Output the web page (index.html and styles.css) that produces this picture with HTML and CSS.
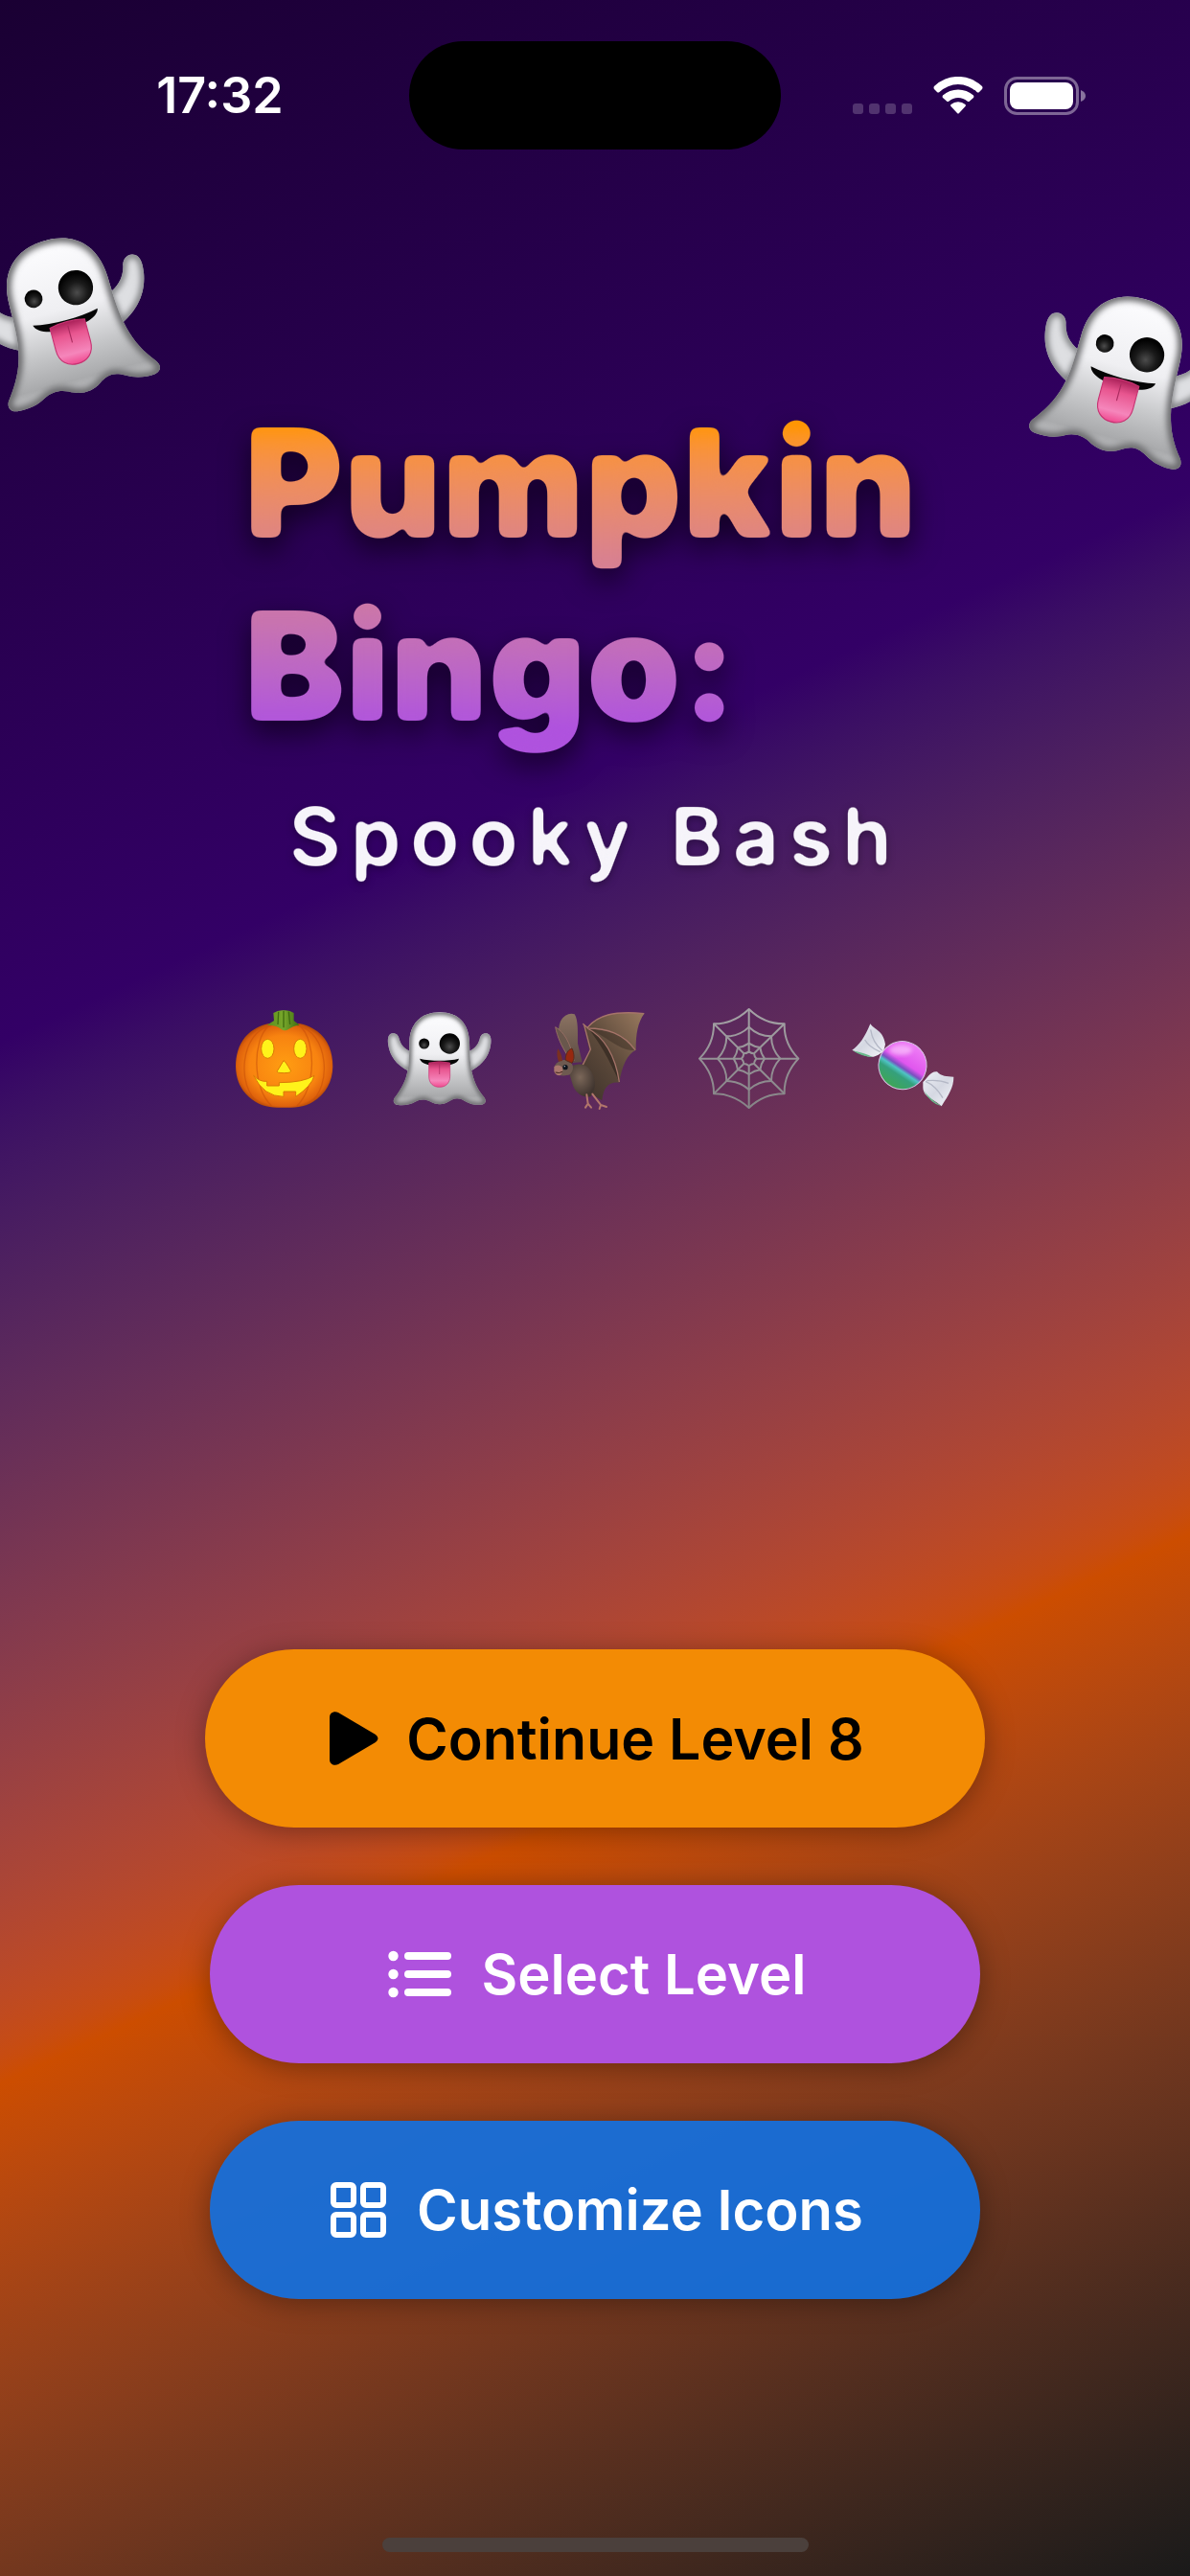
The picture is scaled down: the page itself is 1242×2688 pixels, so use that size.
FILE: index.html
```html
<!DOCTYPE html>
<html lang="en">
<head>
<meta charset="utf-8">
<meta name="viewport" content="width=device-width, initial-scale=1">
<title>Pumpkin Bingo: Spooky Bash</title>
<link rel="stylesheet" href="styles.css">
</head>
<body>
<svg class="defs" aria-hidden="true">
  <defs>
    <filter id="round-large" x="-5%" y="-5%" width="110%" height="110%" color-interpolation-filters="sRGB">
      <feGaussianBlur stdDeviation="5"/>
      <feComponentTransfer><feFuncA type="linear" slope="11" intercept="-5"/></feComponentTransfer>
    </filter>
    <filter id="round-small" x="-5%" y="-5%" width="110%" height="110%" color-interpolation-filters="sRGB">
      <feGaussianBlur stdDeviation="3"/>
      <feComponentTransfer><feFuncA type="linear" slope="7" intercept="-3"/></feComponentTransfer>
    </filter>
    <linearGradient id="ghost-fill" x1="0" y1="0" x2="0" y2="1">
      <stop offset="0" stop-color="#fdfdff"/><stop offset=".45" stop-color="#efeff2"/><stop offset=".7" stop-color="#c6c7c9"/><stop offset=".9" stop-color="#a9aaac"/><stop offset="1" stop-color="#c4c5c7"/>
    </linearGradient>
    <radialGradient id="eye-fill" cx=".5" cy=".65" r=".55">
      <stop offset="0" stop-color="#4c4c4c"/><stop offset=".55" stop-color="#1a1a1a"/><stop offset="1" stop-color="#030303"/>
    </radialGradient>
    <linearGradient id="tongue-fill" x1="0" y1="0" x2="0" y2="1">
      <stop offset="0" stop-color="#a81f57"/><stop offset=".3" stop-color="#e8558f"/><stop offset=".75" stop-color="#f586bb"/><stop offset="1" stop-color="#f04a90"/>
    </linearGradient>
    <filter id="soft" x="-20%" y="-20%" width="140%" height="140%"><feGaussianBlur stdDeviation="6"/></filter>
    <path id="ghost-arm-l" d="M600 206C582 200 566 188 560 166C558 152 548 146 538 148C524 151 523 168 526 186C531 216 548 246 590 266Z"/>
    <path id="ghost-arm-r" d="M774 206C790 200 806 188 812 166C814 152 824 146 834 148C848 151 849 168 846 186C841 216 824 246 782 266Z"/>
    <path id="ghost-body" d="M687 82C628 82 593 118 592 176C591 218 592 246 584 275C577 305 560 330 545 350C539 360 543 370 556 372C580 374 596 370 610 362C626 353 642 354 656 361C676 373 698 373 716 361C734 349 746 349 764 359C780 369 800 373 818 371C832 368 833 358 826 348C808 326 796 304 789 275C782 246 781 218 780 176C778 118 746 82 687 82Z"/>
    <clipPath id="ghost-clip"><use href="#ghost-body"/></clipPath>
    <clipPath id="arm-clip"><use href="#ghost-arm-l"/><use href="#ghost-arm-r"/></clipPath>
    <symbol id="ghost" viewBox="525 66 324 324" overflow="visible">
      <g fill="#dedfe2"><use href="#ghost-arm-l"/><use href="#ghost-arm-r"/></g>
      <g clip-path="url(#arm-clip)"><g fill="none" stroke="#77787b" stroke-width="12" filter="url(#soft)"><use href="#ghost-arm-l"/><use href="#ghost-arm-r"/></g></g>
      <use href="#ghost-body" fill="url(#ghost-fill)"/>
      <g clip-path="url(#ghost-clip)"><use href="#ghost-body" fill="none" stroke="#67686b" stroke-width="16" filter="url(#soft)"/></g>
      <circle cx="638" cy="180" r="16.500" fill="url(#eye-fill)"/>
      <circle cx="718" cy="180" r="32" fill="url(#eye-fill)"/>
      <path d="M624 227C660 235 712 235 747 227C744 243 714 250 686 250C656 250 628 243 624 227Z" fill="#050505"/>
      <path d="M653 240Q686 232 719 240V282C719 305 704 316 686 316S653 305 653 282Z" fill="url(#tongue-fill)" stroke="#c73372" stroke-width="2"/>
      <path d="M686 244V276" stroke="#a92b5f" stroke-width="2"/>
    </symbol>
    <radialGradient id="pumpkin-fill" cx=".5" cy=".5" r=".55">
      <stop offset="0" stop-color="#ff9d12"/><stop offset=".65" stop-color="#f88310"/><stop offset=".88" stop-color="#df620c"/><stop offset="1" stop-color="#9b3a08"/>
    </radialGradient>
    <linearGradient id="stem-fill"><stop offset="0" stop-color="#5d8b1c"/><stop offset=".5" stop-color="#78a82b"/><stop offset="1" stop-color="#3d6a10"/></linearGradient>
    <linearGradient id="wing-fill" x1="0" y1="1" x2="1" y2="0"><stop offset="0" stop-color="#3b3029"/><stop offset=".5" stop-color="#5d4a3b"/><stop offset="1" stop-color="#9a7a5f"/></linearGradient>
    <linearGradient id="back-wing-fill" x1="0" y1="0" x2="0" y2="1"><stop offset="0" stop-color="#8b7362"/><stop offset="1" stop-color="#5c4b43"/></linearGradient>
    <radialGradient id="bat-fill" cx=".45" cy=".4" r=".6"><stop offset="0" stop-color="#7b6759"/><stop offset="1" stop-color="#40352f"/></radialGradient>
    <linearGradient id="web-stroke" gradientUnits="userSpaceOnUse" x1="0" y1="66" x2="0" y2="390"><stop offset="0" stop-color="#a5a2a6"/><stop offset="1" stop-color="#858386"/></linearGradient>
    <linearGradient id="candy-fill" gradientUnits="userSpaceOnUse" x1="990" y1="180" x2="940" y2="320">
      <stop offset="0" stop-color="#ee7cf5"/><stop offset=".42" stop-color="#e056ee"/><stop offset=".53" stop-color="#7b4fc0"/><stop offset=".6" stop-color="#4fc4c4"/><stop offset=".7" stop-color="#35a07c"/><stop offset="1" stop-color="#3fa654"/>
    </linearGradient>
    <linearGradient id="wrap-fill" x1="0" y1="0" x2="1" y2="1"><stop offset="0" stop-color="#eef0f6"/><stop offset=".5" stop-color="#d5d8e2"/><stop offset="1" stop-color="#f4f5fa"/></linearGradient>
  </defs>
</svg>

<div class="screen">
  <header class="status">
    <time class="clock">17:32</time>
    <div class="island"></div>
    <div class="indicators">
      <span class="signal"><i></i><i></i><i></i><i></i></span>
      <svg class="wifi" viewBox="0 0 52 39" aria-label="Wi-Fi">
        <g fill="#fff">
          <path d="M1 10A36 36 0 0 1 51 10Q52 11.500 51 13L48 16Q47 17 45.500 16A28 28 0 0 0 6.500 16Q5 17 4 16L1 13Q0 11.500 1 10Z"/>
          <path d="M10 19.500A24 24 0 0 1 42 19.500Q43 21 42 22L38 25.500Q37 26.500 35.500 25.500A14.500 14.500 0 0 0 16.500 25.500Q15 26.500 14 25.500L10 22Q9 21 10 19.500Z"/>
          <path d="M18.500 29A12 12 0 0 1 33.500 29Q34.500 30 33.500 31L27 38Q26 39 25 38L18.500 31Q17.500 30 18.500 29Z"/>
        </g>
      </svg>
      <svg class="battery" viewBox="0 0 86 40" aria-label="Battery full">
        <rect x="1.500" y="1.500" width="75" height="37" rx="12" fill="none" stroke="#fff" stroke-opacity=".4" stroke-width="3"/>
        <rect x="6" y="6" width="66" height="28" rx="8" fill="#fff"/>
        <path d="M80 14Q85 16 85 20T80 26Z" fill="#fff" fill-opacity=".45"/>
      </svg>
    </div>
  </header>

  <svg class="floating floating-left" aria-hidden="true"><use href="#ghost"/></svg>
  <svg class="floating floating-right" aria-hidden="true"><use href="#ghost"/></svg>

  <main class="content">
    <h1 class="title">Pumpkin<br>Bingo:</h1>
    <p class="subtitle">Spooky Bash</p>

    <div class="icons" aria-hidden="true">
      <svg viewBox="39 66 324 324">
        <path d="M200 124C170 108 128 118 96 142C62 168 48 208 48 252C49 300 70 338 110 362C138 380 170 380 200 380S262 380 290 362C330 338 351 300 352 252C352 208 338 168 304 142C272 118 230 108 200 124Z" fill="url(#pumpkin-fill)"/>
        <g fill="none" stroke="#c9520a" stroke-width="4" opacity=".6"><path d="M160 124C60 140 50 320 120 364M150 126C100 170 100 320 160 374M240 124C340 140 350 320 280 364M250 126C300 170 300 320 240 374"/></g>
        <path d="M146 122L168 108L166 84Q182 74 198 76Q216 74 230 84V108L248 122Q226 124 212 136Q200 142 190 134Q176 122 146 122Z" fill="url(#stem-fill)"/>
        <path d="M182 80L180 120M198 78V130M214 80L218 120" stroke="#3f6b10" stroke-width="4"/>
        <g fill="#fff31a" stroke="#d97a06" stroke-width="3"><ellipse cx="148" cy="196" rx="20" ry="30"/><ellipse cx="250" cy="196" rx="20" ry="30"/><path d="M198 233Q202 233 220 264Q224 272 200 272Q174 272 178 266Z"/><path d="M104 280Q122 300 146 298V312H184V302Q260 302 294 280Q286 312 236 346V330H198V346Q136 346 104 280Z"/></g>
      </svg>
      <svg><use href="#ghost"/></svg>
      <svg viewBox="0 18 324 324">
        <path d="M72 160C46 130 42 90 54 62C64 42 84 34 98 40C110 58 108 100 108 132L122 190L92 192Z" fill="url(#back-wing-fill)"/>
        <path d="M38 80C64 94 86 130 96 186L74 166C58 140 44 112 38 80Z" fill="#69574c" stroke="#946c62" stroke-width="3"/>
        <path d="M126 72L138 80C170 44 220 28 316 38C296 66 290 100 290 152C264 164 246 200 238 254C206 250 188 268 184 310L150 290L112 214C120 190 146 170 144 150Z" fill="url(#wing-fill)"/>
        <path d="M140 84C200 84 250 100 288 152C246 160 200 110 140 84Z" fill="#241c18" opacity=".35"/>
        <path d="M140 84C190 110 226 170 238 252C220 210 180 130 140 84Z" fill="#1f1814" opacity=".5"/>
        <path d="M124 70L138 82C170 44 220 28 316 38M138 84C200 84 250 100 288 152M138 84C190 110 226 170 238 252M128 74L148 150L122 202" fill="none" stroke="#a6746a" stroke-width="4"/>
        <path d="M78 214C90 196 120 190 140 206C166 232 168 276 148 298C126 302 104 288 94 266Z" fill="url(#bat-fill)"/>
        <path d="M136 292L140 320L132 332M140 320L150 332M154 290L180 324L176 336M180 324L198 330" fill="none" stroke="#b2766b" stroke-width="6" stroke-linecap="round"/>
        <path d="M36 200C46 186 60 180 76 184C96 192 98 214 84 228C66 236 46 232 36 222Z" fill="#6e5a50"/>
        <path d="M48 188C42 172 42 158 46 148Q58 164 60 186Z" fill="#7a3021"/>
        <path d="M70 184C68 166 78 150 90 147C98 164 98 182 90 193Z" fill="#97280f" stroke="#5b2a1c" stroke-width="3"/>
        <path d="M34 204Q46 194 60 206Q64 222 52 232Q36 230 34 218Z" fill="#a9776c"/><circle cx="69" cy="206" r="8" fill="#10151c"/><circle cx="67" cy="203" r="2" fill="#b8cbd8"/><path d="M38 222Q50 226 60 220" stroke="#3b211c" stroke-width="3" fill="none"/>
      </svg>
      <svg viewBox="327 66 324 324">
        <g fill="none" stroke="url(#web-stroke)" stroke-width="6" stroke-linejoin="round">
          <path d="M485 72Q533 119 596 118Q594 180 640 227Q594 276 596 337Q533 336 485 381Q436 336 375 337Q376 276 330 227Q376 180 375 118Q436 119 485 72Z"/>
          <path d="M485 128Q515 157 555 157Q555 198 583 227Q555 256 555 297Q515 297 485 324Q456 297 415 297Q415 256 387 227Q415 198 415 157Q456 157 485 128Z"/>
          <path d="M485 179Q503 191 520 192Q522 211 534 227Q522 244 520 262Q503 264 485 276Q467 264 450 262Q448 244 437 227Q448 211 450 192Q467 191 485 179Z"/>
          <path d="M485 205Q493 211 501 211Q502 220 508 227Q502 235 501 243Q493 243 485 249Q477 243 469 243Q468 235 462 227Q468 220 469 211Q477 211 485 205Z"/>
          <path d="M485 72V205M485 249V381M330 227H462M508 227H640M375 118L469 211M596 118L501 211M375 337L469 243M596 337L501 243"/>
        </g>
      </svg>
      <svg viewBox="813 66 324 324">
        <path d="M865 118C876 136 906 138 912 182L906 206C896 208 886 226 856 220C840 214 824 208 808 200C830 186 848 160 865 118Z" fill="url(#wrap-fill)"/>
        <path d="M810 202Q850 210 872 222Q840 222 810 202Z" fill="#69b98b"/>
        <path d="M866 136Q872 176 902 202M848 168Q860 190 896 206" stroke="#b4b8c6" stroke-width="4" fill="none"/>
        <path d="M1030 300C1044 288 1052 266 1074 268C1088 284 1104 282 1126 284C1126 318 1110 340 1088 376C1064 352 1032 350 1030 318Z" fill="url(#wrap-fill)"/>
        <path d="M1032 326Q1050 352 1088 376Q1052 366 1032 326Z" fill="#69b98b"/>
        <path d="M1038 298Q1070 312 1092 350M1042 296Q1080 292 1110 304" stroke="#b4b8c6" stroke-width="4" fill="none"/>
        <g transform="rotate(14 966 248)"><circle cx="966" cy="248" r="75" fill="url(#candy-fill)" stroke="#d9c3e6" stroke-width="3"/></g>
        <ellipse cx="960" cy="200" rx="36" ry="16" fill="#ffd5ff" opacity=".6" filter="url(#soft)"/>
      </svg>
    </div>

    <nav class="actions">
      <button type="button" class="action action-play">
        <svg class="icon-play" viewBox="0 0 52 56" aria-hidden="true"><path d="M0 6C0 1 5-1 9 1L48 24Q53 28 48 32L9 55C5 57 0 55 0 50Z" fill="currentColor"/></svg>
        Continue Level 8
      </button>
      <button type="button" class="action action-levels">
        <svg class="icon-list" viewBox="0 0 66 50" aria-hidden="true"><g fill="currentColor"><circle cx="5.500" cy="6" r="5.200"/><circle cx="5.500" cy="25" r="5.200"/><circle cx="5.500" cy="44" r="5.200"/><rect x="17" y="2" width="49" height="8" rx="4"/><rect x="17" y="21" width="49" height="8" rx="4"/><rect x="17" y="40" width="49" height="8" rx="4"/></g></svg>
        Select Level
      </button>
      <button type="button" class="action action-icons">
        <svg class="icon-grid" viewBox="0 0 58 58" aria-hidden="true"><g fill="none" stroke="currentColor" stroke-width="6"><rect x="3" y="3" width="21" height="21" rx="3"/><rect x="34" y="3" width="21" height="21" rx="3"/><rect x="3" y="34" width="21" height="21" rx="3"/><rect x="34" y="34" width="21" height="21" rx="3"/></g></svg>
        Customize Icons
      </button>
    </nav>
  </main>
  <div class="home-indicator"></div>
</div>
</body>
</html>
```
FILE: styles.css
```css
* {
  box-sizing: border-box;
}

body {
  margin: 0;
  color: #fff;
  font-family: Inter, "Liberation Sans", sans-serif;
}

.defs {
  position: absolute;
  width: 0;
  height: 0;
}

.screen {
  position: relative;
  display: flex;
  flex-direction: column;
  min-height: 100vh;
  padding-bottom: 25px;
  overflow: hidden;
  background: linear-gradient(155.2deg in oklab, #1a0033 0%, #330066 33.33%, #cc4d00 66.67%, #1a1a1a 100%);
}

/* Status bar */

.status {
  display: grid;
  grid-template-columns: 1fr 388px 1fr;
  align-items: center;
  padding-top: 43px;
}

.clock {
  padding-left: 32px;
  text-align: center;
  font-size: 52px;
  line-height: 60px;
  font-weight: 600;
}

.island {
  height: 113px;
  border-radius: 57px;
  background: #000;
}

.indicators {
  display: flex;
  align-items: center;
  justify-content: flex-end;
  padding-right: 108px;
}

.signal {
  display: flex;
  gap: 6px;
  padding-top: 28px;
  margin-right: 22px;
}

.signal i {
  width: 11px;
  height: 11px;
  border-radius: 3px;
  background: rgba(255, 255, 255, 0.2);
}

.wifi {
  width: 52px;
  height: 39px;
  margin-right: 22px;
}

.battery {
  width: 86px;
  height: 40px;
}

/* Floating ghosts behind the title */

.floating {
  position: absolute;
  width: 184px;
  height: 184px;
  overflow: visible;
}

.floating-left {
  top: 239px;
  left: -23px;
  transform: rotate(-15deg);
}

.floating-right {
  top: 300px;
  right: -23px;
  transform: rotate(15deg);
}

/* Title and menu */

.content {
  display: flex;
  flex: 1;
  flex-direction: column;
  align-items: center;
  padding-top: 252px;
}

/* The filters soften the corners of the letters */

.title {
  margin: 0;
  padding-right: 30px;
  font-size: 158px;
  line-height: 191px;
  font-weight: 900;
  color: transparent;
  background: linear-gradient(in oklab, #ff9500 10%, #af52de 92%);
  -webkit-background-clip: text;
  background-clip: text;
  filter: url(#round-large) drop-shadow(0 12px 15px rgba(0, 0, 0, 0.6));
}

.subtitle {
  margin: 33px 0 0;
  font-size: 84px;
  line-height: 100px;
  font-weight: 600;
  letter-spacing: 10px;
  color: #f6f4fa;
  filter: url(#round-small) drop-shadow(0 3px 4px rgba(0, 0, 0, 0.3));
}

.icons {
  display: flex;
  gap: 54px;
  margin-top: 128px;
}

.icons svg {
  width: 108px;
  height: 108px;
  overflow: visible;
}

.actions {
  display: flex;
  flex-direction: column;
  align-items: center;
  gap: 60px;
  margin-top: auto;
  margin-bottom: 249px;
}

.action {
  display: flex;
  align-items: center;
  justify-content: center;
  gap: 32px;
  width: 804px;
  height: 186px;
  padding: 0 0 0 4px;
  border: 0;
  border-radius: 93px;
  color: #fff;
  font: inherit;
  font-size: 58px;
  font-weight: 600;
  box-shadow: 0 4px 30px rgba(0, 0, 0, 0.35);
}

.action-play {
  gap: 28px;
  width: 814px;
  color: #000;
  font-size: 59px;
  background: #f38b04;
}

.action-levels {
  background: #af52de;
}

.action-icons {
  background: rgba(18, 112, 224, 0.92);
}

.icon-play {
  width: 52px;
  height: 56px;
}

.icon-list {
  width: 66px;
  height: 50px;
}

.icon-grid {
  width: 58px;
  height: 58px;
}

.home-indicator {
  width: 445px;
  height: 15px;
  margin: 0 auto;
  border-radius: 8px;
  background: #4b403c;
}
```
